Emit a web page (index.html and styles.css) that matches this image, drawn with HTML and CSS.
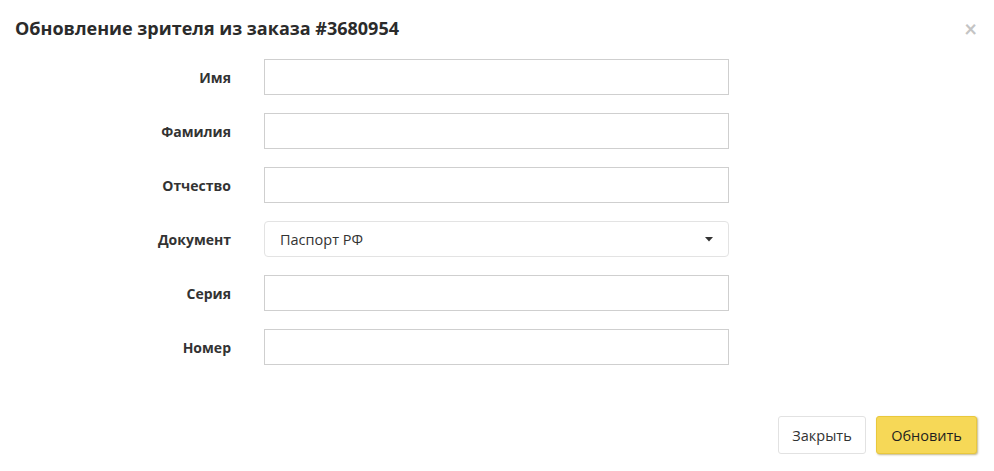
FILE: index.html
```html
<!DOCTYPE html>
<html lang="ru">
<head>
<meta charset="utf-8">
<link rel="stylesheet" href="styles.css">
</head>
<body>
<div class="modal">
  <div class="modal-header">
    <h1 class="title">Обновление зрителя из заказа #3680954</h1>
    <span class="close">×</span>
  </div>
  <form class="form">
    <div class="row"><label class="label">Имя</label><div class="input"></div></div>
    <div class="row"><label class="label">Фамилия</label><div class="input"></div></div>
    <div class="row"><label class="label">Отчество</label><div class="input"></div></div>
    <div class="row"><label class="label">Документ</label>
      <div class="select"><span>Паспорт РФ</span>
        <svg class="caret" width="8" height="5" viewBox="0 0 8 5"><path d="M0 0H8L4 4.5Z" fill="#333"/></svg>
      </div>
    </div>
    <div class="row"><label class="label">Серия</label><div class="input"></div></div>
    <div class="row"><label class="label">Номер</label><div class="input"></div></div>
  </form>
  <div class="footer">
    <button class="btn btn-default" type="button">Закрыть</button>
    <button class="btn btn-primary" type="button">Обновить</button>
  </div>
</div>
</body>
</html>
```
FILE: styles.css
```css
html, body {
  margin: 0;
  padding: 0;
  background: #fff;
  font-family: "Open Sans", "Noto Sans", sans-serif;
  color: #333;
}
.modal {
  width: 994px;
  height: 471px;
  box-sizing: border-box;
}
.modal-header {
  display: flex;
  justify-content: space-between;
  align-items: flex-start;
  padding: 15px 17px 0 15px;
  height: 59px;
  box-sizing: border-box;
}
.title {
  margin: 0;
  font-size: 18px;
  font-weight: 700;
  line-height: 26px;
  color: #2b2b2b;
}
.close {
  font-family: Lato, sans-serif;
  font-size: 22px;
  line-height: 14px;
  margin-top: 7px;
  color: #c4c4c4;
  font-weight: 700;
}
.form {
  display: flex;
  flex-direction: column;
  gap: 18px;
}
.row {
  display: flex;
  align-items: center;
  height: 36px;
}
.label {
  width: 264px;
  text-align: right;
  padding-right: 33px;
  box-sizing: border-box;
  font-size: 14px;
  font-weight: 700;
  color: #333;
}
.input {
  width: 465px;
  height: 36px;
  box-sizing: border-box;
  border: 1px solid #cfcfcf;
  background: #fff;
}
.select {
  width: 465px;
  height: 36px;
  box-sizing: border-box;
  border: 1px solid #e3e3e3;
  border-radius: 4px;
  display: flex;
  align-items: center;
  justify-content: space-between;
  padding: 0 15px 0 15px;
  font-size: 14.5px;
  color: #333;
}
.caret {
  display: block;
}
.footer {
  display: flex;
  justify-content: flex-end;
  gap: 10px;
  padding: 51px 17px 0 0;
}
.btn {
  font-family: "Open Sans", "Noto Sans", sans-serif;
  font-size: 14.5px;
  height: 38px;
  border-radius: 3px;
  cursor: pointer;
}
.btn-default {
  width: 88px;
  background: #fff;
  border: 1px solid #e2e2e2;
  color: #333;
}
.btn-primary {
  width: 101px;
  background: #f6d857;
  border: 1px solid #e9c83c;
  color: #1f1f1f;
  box-shadow: 1px 1px 2px rgba(120, 95, 0, 0.45);
}
```
